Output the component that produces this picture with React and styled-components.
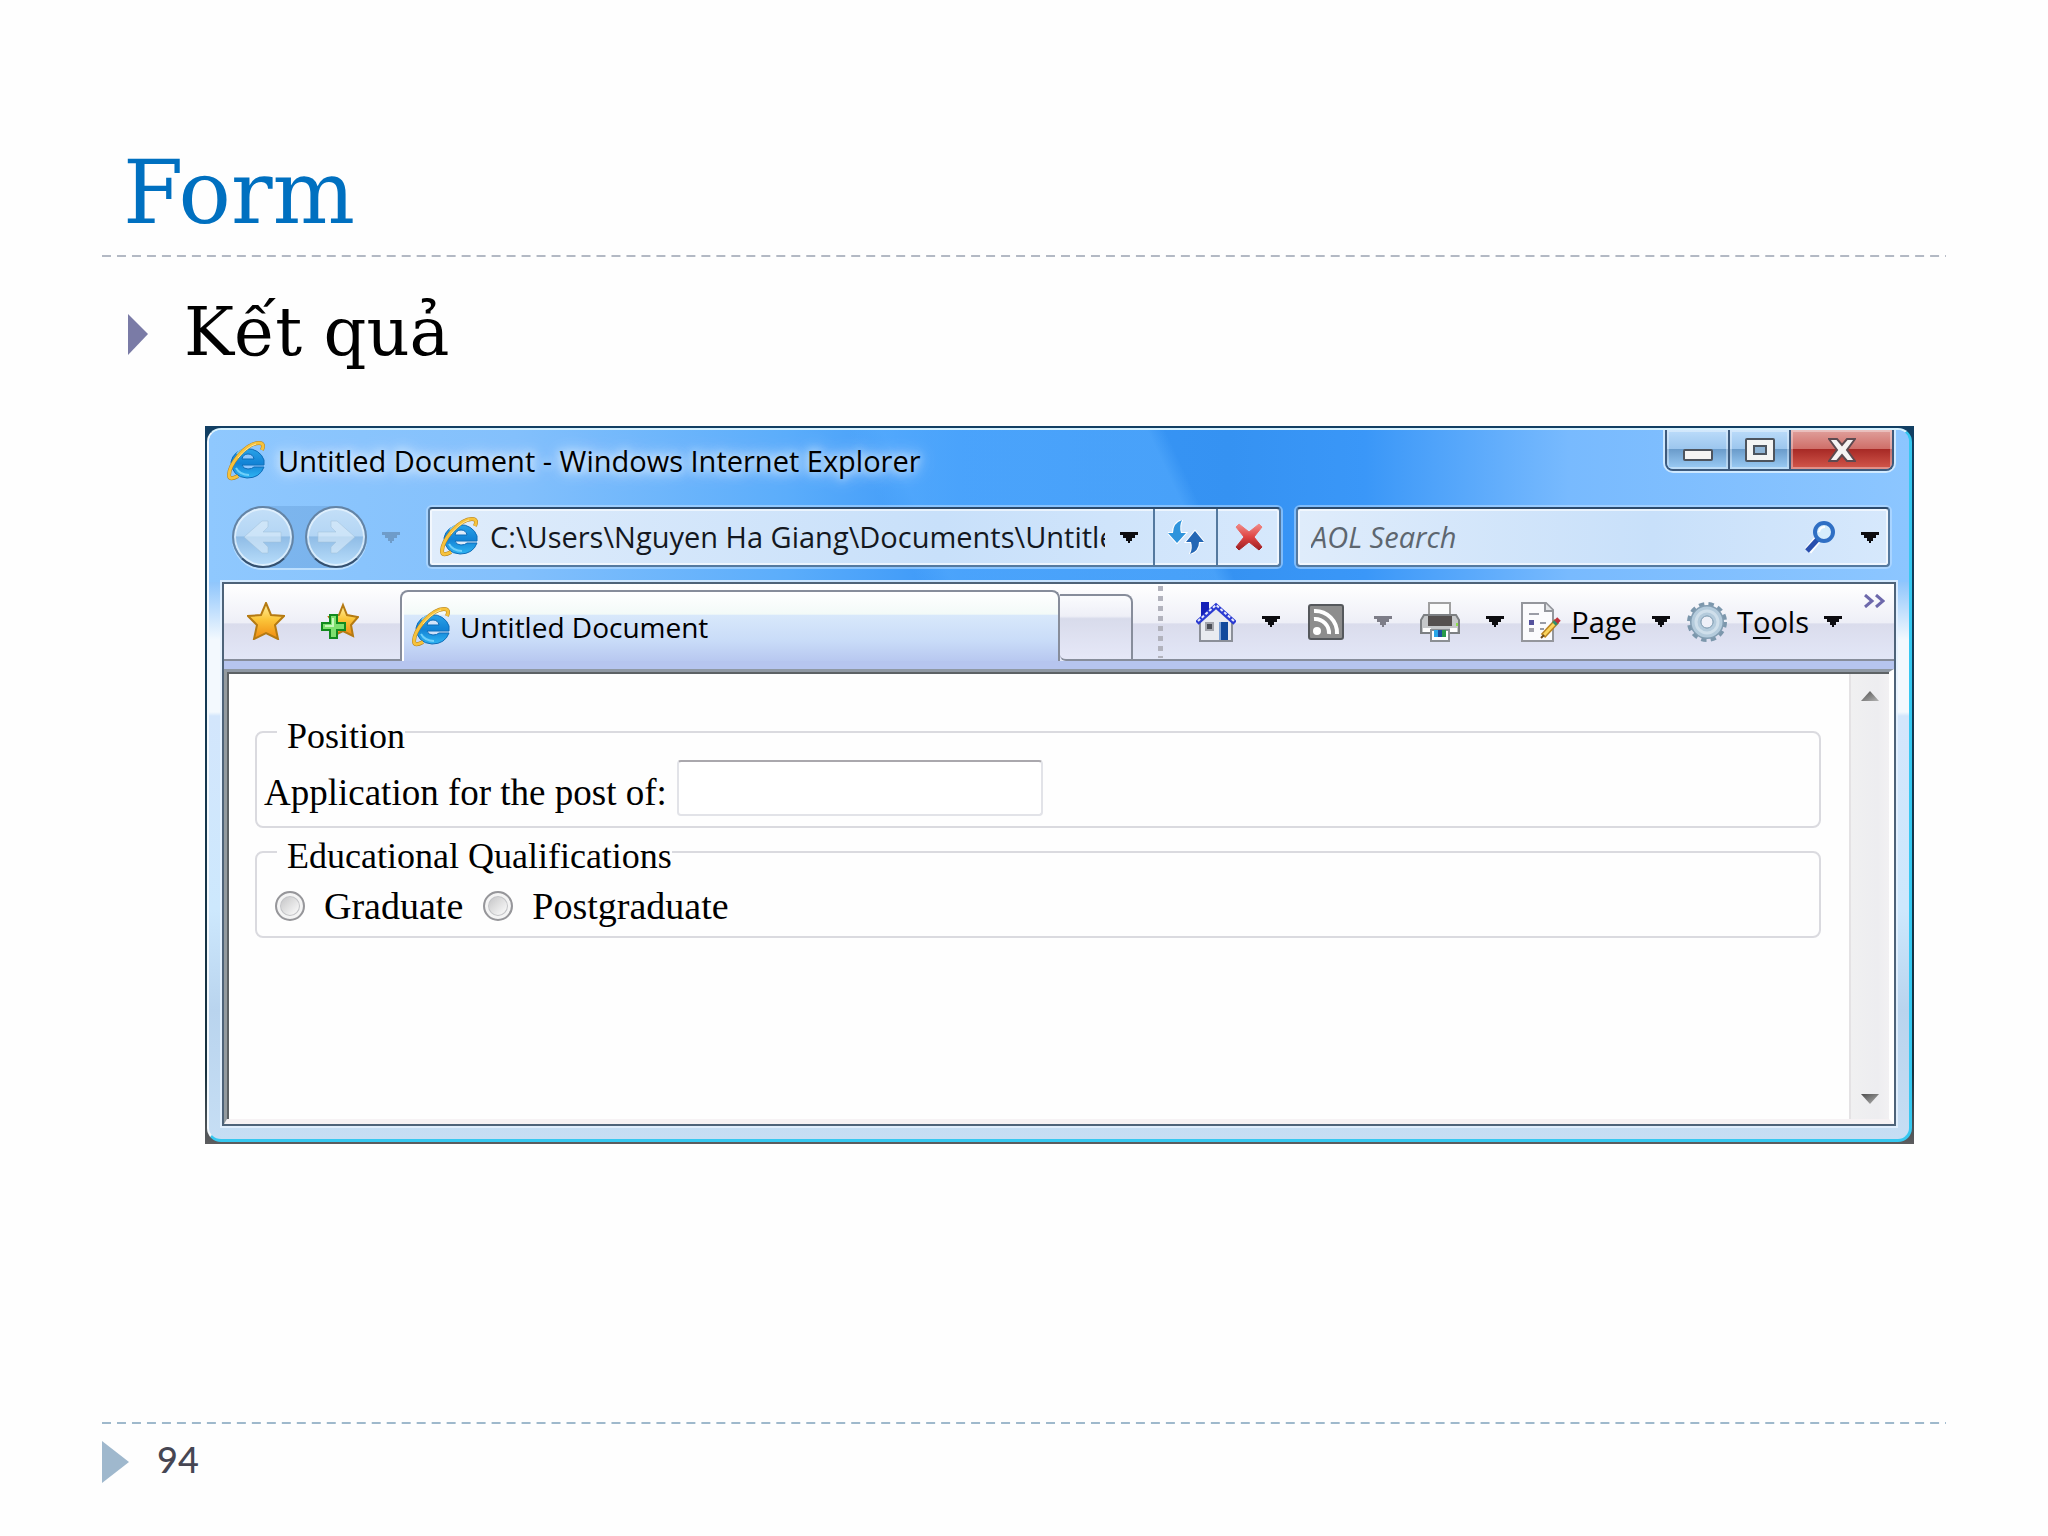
import React, { useState } from 'react';
import styled, { createGlobalStyle, css } from 'styled-components';

const GlobalStyle = createGlobalStyle`
  * {
    box-sizing: border-box;
  }

  body {
    margin: 0;
    background: #fefefe;
    color: #000;
    font-family: "Open Sans", "Noto Sans", sans-serif;
  }

  button, input {
    font: inherit;
    color: inherit;
    border: 0;
    padding: 0;
    margin: 0;
    background: none;
  }
`;

/* ---------- icons ---------- */

const IeIcon = () => (
  <svg width="38" height="40" viewBox="0 0 38 40" aria-hidden="true">
    <defs>
      <linearGradient id="ieBlue" x1="0" y1="0" x2="0" y2="1">
        <stop offset="0" stopColor="#2aa3e8" />
        <stop offset="0.5" stopColor="#1283d6" />
        <stop offset="1" stopColor="#2fb4f2" />
      </linearGradient>
    </defs>
    <path
      d="M4 21A17 16 0 0 1 37 19V24H15Q16 28 21 28Q25 28 27 26H37Q33 37 20 37Q5 36 4 21ZM15 18H27Q26 13 21 13Q16 13 15 18Z"
      fill="url(#ieBlue)"
      stroke="#0d6cb8"
      strokeWidth="1"
      fillRule="evenodd"
    />
    <path d="M10 13Q14 8 21 8" fill="none" stroke="#8bd6fa" strokeWidth="2" />
    <path d="M9 27Q13 34 22 34" fill="none" stroke="#6fd0fa" strokeWidth="2" />
    <path
      d="M35 9Q38 2 32 2Q23 2 12 14Q2 26 2 34Q2 40 11 35"
      fill="none"
      stroke="#b07f20"
      strokeWidth="4"
    />
    <path
      d="M35 9Q38 2 32 2Q23 2 12 14Q2 26 2 34Q2 40 11 35"
      fill="none"
      stroke="#f6c23c"
      strokeWidth="3"
    />
    <path d="M29 3Q20 6 11 17" fill="none" stroke="#fde695" strokeWidth="1" />
  </svg>
);

const ArrowIcon = ({ flip }) => (
  <svg width="40" height="36" viewBox="0 0 40 36" aria-hidden="true">
    <path
      d="M1 18L19 2L25 2L25 8L20 13H38V23H20L25 28V34H19Z"
      fill="#dcecfa"
      fillOpacity="0.6"
      stroke="#9fbfd9"
      strokeOpacity="0.5"
      transform={flip ? 'translate(40 0) scale(-1 1)' : undefined}
    />
  </svg>
);

const Caret = ({ color = '#0c0c10' }) => (
  <svg width="18" height="11" viewBox="0 0 18 11" aria-hidden="true">
    <path d="M0 0H18V3H15V6H12V9H10V11H8V9H6V6H3V3H0Z" fill={color} />
  </svg>
);

const ScrollArrow = ({ down }) => (
  <svg width="18" height="10" viewBox="0 0 18 10" aria-hidden="true">
    <defs>
      <linearGradient id="scrollFill" x1="0" y1="0" x2="1" y2="1">
        <stop offset="0" stopColor="#4c4c4c" />
        <stop offset="1" stopColor="#b4b4b4" />
      </linearGradient>
    </defs>
    <path d={down ? 'M0 0H18L9 10Z' : 'M0 10H18L9 0Z'} fill="url(#scrollFill)" />
  </svg>
);

const RefreshIcon = () => (
  <svg width="36" height="34" viewBox="0 0 36 34" aria-hidden="true">
    <g stroke="#fff" strokeWidth="2" paintOrder="stroke">
      <path d="M14 0Q5 3 5 13H0L9 23L18 13H13Q11 6 14 0Z" fill="#2f94dc" />
      <path d="M22 34Q31 31 31 22H36L27 11L18 22H23Q25 28 22 34Z" fill="#2467b5" />
    </g>
  </svg>
);

const StopIcon = () => (
  <svg width="28" height="28" viewBox="0 0 28 28" aria-hidden="true">
    <defs>
      <linearGradient id="stopRed" x1="0" y1="0" x2="0" y2="1">
        <stop offset="0" stopColor="#f08b88" />
        <stop offset="0.5" stopColor="#df4442" />
        <stop offset="1" stopColor="#9c1f24" />
      </linearGradient>
    </defs>
    <path
      d="M1 4L4 1L14 9L24 1L27 4L19 14L27 24L24 27L14 19L4 27L1 24L9 14Z"
      fill="url(#stopRed)"
      stroke="url(#stopRed)"
    />
  </svg>
);

const SearchIcon = () => (
  <svg width="32" height="34" viewBox="0 0 32 34" aria-hidden="true">
    <path d="M3 31L12 20" stroke="#fff" strokeWidth="8" />
    <path d="M2 31L13 19" stroke="#2a4fae" strokeWidth="5" />
    <circle cx="19" cy="12" r="9" fill="#d5edfc" stroke="#2f6fc4" strokeWidth="4" />
    <path d="M14 12Q15 7 20 7" fill="none" stroke="#fff" strokeWidth="2" />
  </svg>
);

const StarIcon = () => (
  <svg width="38" height="38" viewBox="0 0 38 38" aria-hidden="true">
    <defs>
      <linearGradient id="starGold" x1="0" y1="0" x2="0" y2="1">
        <stop offset="0" stopColor="#fff2a8" />
        <stop offset="0.45" stopColor="#fbc63a" />
        <stop offset="1" stopColor="#f08a10" />
      </linearGradient>
    </defs>
    <path
      d="M19 1L24 13L37 14L28 23L31 37L19 31L7 37L10 23L1 14L14 13Z"
      fill="url(#starGold)"
      stroke="#b57a12"
      strokeWidth="2"
    />
  </svg>
);

const AddStarIcon = () => (
  <svg width="38" height="38" viewBox="0 0 38 38" aria-hidden="true">
    <path
      d="M22 3L26 13L37 15L30 23L32 34L22 29L12 34L14 23L8 15L18 13Z"
      fill="url(#starGold)"
      stroke="#b57a12"
      strokeWidth="2"
    />
    <path
      d="M9 13H16V21H24V28H16V36H9V28H1V21H9Z"
      fill="#7ee06e"
      stroke="#128a1e"
      strokeWidth="2"
    />
    <path d="M12 16V24H4" fill="none" stroke="#c9f8bd" strokeWidth="2" />
  </svg>
);

const HomeIcon = () => (
  <svg width="40" height="40" viewBox="0 0 40 40" aria-hidden="true">
    <path d="M5 0H13V14H5Z" fill="#1420b8" />
    <path d="M4 19L20 4L36 19V39H4Z" fill="#e9ebf0" stroke="#8b8f98" strokeWidth="2" />
    <path d="M1 21L20 4L39 21" fill="none" stroke="#2b3bd2" strokeWidth="5" />
    <path
      d="M2 19L20 3L38 19"
      fill="none"
      stroke="#e6e9fb"
      strokeWidth="2"
      strokeDasharray="3 2"
    />
    <path d="M10 21H17V28H10Z" fill="#4a4d55" stroke="#a4a6ad" strokeWidth="2" />
    <path d="M23 20H32V38H23Z" fill="#124a9c" />
    <path d="M23 20H25V38H23Z" fill="#7ea3d6" />
  </svg>
);

const FeedIcon = () => (
  <svg width="36" height="36" viewBox="0 0 36 36" aria-hidden="true">
    <rect x="1" y="1" width="34" height="34" rx="2" fill="#8d8d8d" stroke="#55585c" strokeWidth="2" />
    <circle cx="9" cy="27" r="4" fill="#fff" />
    <path d="M6 15A14 14 0 0 1 21 30" fill="none" stroke="#fff" strokeWidth="4" />
    <path d="M6 7A22 22 0 0 1 29 30" fill="none" stroke="#fff" strokeWidth="4" />
  </svg>
);

const PrinterIcon = () => (
  <svg width="40" height="40" viewBox="0 0 40 40" aria-hidden="true">
    <path d="M9 1H30V15H9Z" fill="#fbfbfb" stroke="#a0a0a0" strokeWidth="2" />
    <path d="M4 13H36L39 18V31H1V18Z" fill="#c6c8ca" stroke="#7d8083" strokeWidth="2" />
    <path d="M8 14H32V24H8Z" fill="#55504f" />
    <path d="M3 26H11V30H3ZM30 26H37V30H30Z" fill="#fff" />
    <path d="M36 21H38V24H36Z" fill="#8fe04e" />
    <path d="M11 28H29V39H11Z" fill="#fff" stroke="#8b8f93" strokeWidth="2" />
    <path d="M14 28H18V35H14Z" fill="#2aa7e8" />
    <path d="M18 28H22V35H18Z" fill="#1d4fa0" />
    <path d="M22 28H26V35H22Z" fill="#2a9a4c" />
  </svg>
);

const PageIcon = () => (
  <svg width="40" height="40" viewBox="0 0 40 40" aria-hidden="true">
    <path d="M1 1H25L32 8V39H1Z" fill="#fbfbfd" stroke="#94969c" strokeWidth="2" />
    <path d="M24 1V9H32" fill="#e4e6ea" stroke="#94969c" strokeWidth="2" />
    <path d="M8 12H18M19 21H25M19 27H23" stroke="#9a9ca6" strokeWidth="2" />
    <path d="M8 18H13V23H8Z" fill="#54519c" />
    <path d="M8 26H13V30H8Z" fill="#a2a2aa" />
    <path d="M22 34L36 19" stroke="#b98221" strokeWidth="6" />
    <path d="M23 33L35 20" stroke="#fbd45c" strokeWidth="3" />
    <path d="M34 21L38 17" stroke="#c0313c" strokeWidth="5" />
    <path d="M33 22L35 20" stroke="#2f8f6b" strokeWidth="5" />
    <path d="M20 36L23 33" stroke="#6b4a1a" strokeWidth="2" />
  </svg>
);

const GearIcon = () => (
  <svg width="40" height="40" viewBox="0 0 40 40" aria-hidden="true">
    <circle cx="20" cy="20" r="17" fill="none" stroke="#7c97ac" strokeWidth="6" strokeDasharray="5 4" />
    <circle cx="20" cy="20" r="11" fill="none" stroke="#829db2" strokeWidth="12" />
    <circle cx="20" cy="20" r="11" fill="none" stroke="#b4cbdc" strokeWidth="9" />
    <circle cx="20" cy="20" r="11" fill="none" stroke="#cfdfeb" strokeWidth="3" />
    <circle cx="20" cy="20" r="6" fill="#eef0f8" stroke="#8ba6ba" strokeWidth="1" />
  </svg>
);

const MoreIcon = () => (
  <svg width="21" height="14" viewBox="0 0 21 14" aria-hidden="true">
    <path d="M1 1L8 7L1 13M12 1L19 7L12 13" fill="none" stroke="#6d68ab" strokeWidth="3" />
  </svg>
);

const MinimizeIcon = () => (
  <svg width="30" height="12" viewBox="0 0 30 12" aria-hidden="true">
    <rect x="1" y="1" width="28" height="10" rx="1" fill="#f4f4f4" stroke="#4d545e" strokeWidth="2" />
  </svg>
);

const MaximizeIcon = () => (
  <svg width="30" height="24" viewBox="0 0 30 24" aria-hidden="true">
    <rect x="1" y="1" width="28" height="22" rx="1" fill="#f4f4f4" stroke="#4d545e" strokeWidth="2" />
    <rect x="9" y="8" width="12" height="8" fill="#8fb4d6" stroke="#4d545e" strokeWidth="2" />
  </svg>
);

const CloseIcon = () => (
  <svg width="28" height="24" viewBox="0 0 28 24" aria-hidden="true">
    <path
      d="M1 1H9L14 7L19 1H27L19 12L27 23H19L14 17L9 23H1L9 12Z"
      fill="#f6f3f3"
      stroke="#5d4a50"
      strokeWidth="2"
    />
  </svg>
);

/* ---------- page ---------- */

const commands = [
  { name: 'Home', icon: <HomeIcon /> },
  { name: 'Feeds', icon: <FeedIcon />, disabled: true },
  { name: 'Print', icon: <PrinterIcon /> },
];

const App = () => {
  const [post, setPost] = useState('');
  const [address, setAddress] = useState('C:\\Users\\Nguyen Ha Giang\\Documents\\Untitled');

  return (
    <>
      <GlobalStyle />
      <Slide>
        <Title>Form</Title>
        <DashedLine color="#b3b9c4" />
        <Bullet>
          <BulletMark width="20" height="41" viewBox="0 0 20 41" aria-hidden="true">
            <path d="M0 0L20 20L0 41Z" fill="#7a7ba6" />
          </BulletMark>
          Kết quả
        </Bullet>

        <Window>
          <Frame>
            <Header>
              <TitleBar>
                <WindowTitle>
                  <IeIcon />
                  <span>Untitled Document - Windows Internet Explorer</span>
                </WindowTitle>
                <WindowButtons>
                  <WindowButton aria-label="Minimize" low><MinimizeIcon /></WindowButton>
                  <WindowButton aria-label="Maximize"><MaximizeIcon /></WindowButton>
                  <WindowButton aria-label="Close" danger><CloseIcon /></WindowButton>
                </WindowButtons>
              </TitleBar>

              <NavBar>
                <History>
                  <RoundButton aria-label="Back"><ArrowIcon /></RoundButton>
                  <RoundButton aria-label="Forward"><ArrowIcon flip /></RoundButton>
                </History>
                <HistoryMenu aria-label="Recent pages"><Caret color="#6f9cc9" /></HistoryMenu>
                <AddressBar>
                  <IeIcon />
                  <AddressInput
                    aria-label="Address"
                    value={address}
                    onChange={(e) => setAddress(e.target.value)}
                  />
                  <FieldButton aria-label="Show addresses" width={48}><Caret /></FieldButton>
                  <FieldButton aria-label="Refresh" width={63} divided><RefreshIcon /></FieldButton>
                  <FieldButton aria-label="Stop" width={63} divided><StopIcon /></FieldButton>
                </AddressBar>
                <SearchBar>
                  <SearchInput aria-label="Search" placeholder="AOL Search" />
                  <FieldButton aria-label="Search" width={63}><SearchIcon /></FieldButton>
                  <FieldButton aria-label="Search options" width={36}><Caret /></FieldButton>
                </SearchBar>
              </NavBar>
            </Header>

            <Client>
              <TabRow>
                <Favorites>
                  <button aria-label="Favorites"><StarIcon /></button>
                  <button aria-label="Add to favorites"><AddStarIcon /></button>
                </Favorites>
                <Tab><IeIcon />Untitled Document</Tab>
                <NewTab aria-label="New tab" />
                <Commands>
                  <Grip />
                  <CommandGroup>
                    {commands.map((item) => (
                      <Command key={item.name} aria-label={item.name}>
                        <CommandIcon>{item.icon}</CommandIcon>
                        <Caret color={item.disabled ? '#7d7d88' : undefined} />
                      </Command>
                    ))}
                  </CommandGroup>
                  <MenuCommand>
                    <PageIcon /><span><u>P</u>age</span><Caret />
                  </MenuCommand>
                  <MenuCommand>
                    <GearIcon /><span>T<u>o</u>ols</span><Caret />
                  </MenuCommand>
                  <More aria-label="More commands"><MoreIcon /></More>
                </Commands>
              </TabRow>
              <Strip />

              <View>
                <Document>
                  <Fieldset>
                    <legend>Position</legend>
                    <FieldRow>
                      <label htmlFor="post">Application for the post of:</label>
                      <TextBox id="post" value={post} onChange={(e) => setPost(e.target.value)} />
                    </FieldRow>
                  </Fieldset>
                  <Fieldset>
                    <legend>Educational Qualifications</legend>
                    <RadioRow>
                      <RadioLabel><Radio name="level" value="graduate" />Graduate</RadioLabel>
                      <RadioLabel><Radio name="level" value="postgraduate" />Postgraduate</RadioLabel>
                    </RadioRow>
                  </Fieldset>
                </Document>
                <ScrollBar>
                  <button aria-label="Scroll up"><ScrollArrow /></button>
                  <button aria-label="Scroll down"><ScrollArrow down /></button>
                </ScrollBar>
              </View>
            </Client>
          </Frame>
        </Window>

        <Footer>
          <DashedLine color="#9fb9cc" />
          <PageNumber>
            <svg width="27" height="42" viewBox="0 0 27 42" aria-hidden="true">
              <path d="M0 0L27 21L0 42Z" fill="#9fb8cd" />
            </svg>
            <span>94</span>
          </PageNumber>
        </Footer>
      </Slide>
    </>
  );
};

export default App;

/* ---------- slide ---------- */

const Slide = styled.main`
  min-height: 100vh;
  display: flex;
  flex-direction: column;
  padding: 143px 102px 48px;
`;

const Title = styled.h1`
  margin: 0;
  padding: 0 21px 12px;
  font-family: "DejaVu Serif", serif;
  font-weight: 400;
  font-size: 87px;
  line-height: 100px;
  color: #0070c0;
`;

const DashedLine = styled.div`
  height: 2px;
  background: linear-gradient(90deg, ${props => props.color} 60%, transparent 60%) 0 0 / 15px 2px round;
`;

const Bullet = styled.div`
  display: flex;
  align-items: center;
  gap: 36px;
  margin-top: 35px;
  padding-left: 26px;
  font-family: "DejaVu Serif", serif;
  font-size: 67px;
  line-height: 80px;
`;

const BulletMark = styled.svg`
  flex: none;
  margin-top: 4px;
`;

const Footer = styled.footer`
  margin-top: auto;
`;

const PageNumber = styled.div`
  display: flex;
  align-items: center;
  gap: 28px;
  margin-top: 12px;
  font-family: Lato, sans-serif;
  font-size: 36px;
  line-height: 46px;
  color: #464653;

  span {
    padding-bottom: 6px;
    font-weight: 500;
  }
`;

/* ---------- browser window ---------- */

const Window = styled.section`
  margin: 54px 32px 32px 103px;
  padding: 2px;
  background: linear-gradient(#123f63, #16313f 90%, #5c5c5e);
`;

const Frame = styled.div`
  border: solid;
  border-width: 2px 3px 3px 2px;
  border-color: #d6f2ff #35c8f0 #35c8f0 #f2f8fd;
  border-radius: 14px;
  overflow: hidden;
  padding-bottom: 13px;
  background: linear-gradient(
    #7fbdfb 0, #8cc4fc 150px, #f3f9fe 210px, #f3f9fe 282px,
    #d3e6fc 286px, #cde8fd 480px, #b9d4ee 580px, #c6def4
  );
`;

const Header = styled.header`
  padding-bottom: 14px;
  background:
    linear-gradient(65deg, transparent 40%, rgba(90, 175, 255, 0.5) 42% 57%, transparent 58%),
    linear-gradient(90deg, #8fc8fe 0, #83c0fc 18%, #5badfb 34%, #3a97f8 44%, #3592f2 60%, #3a97f8 68%, #78bafe 80%, #8cc6ff 100%);
`;

const TitleBar = styled.div`
  display: flex;
  justify-content: space-between;
  align-items: flex-start;
  padding: 0 15px 0 18px;
`;

const WindowTitle = styled.div`
  display: flex;
  align-items: center;
  gap: 13px;
  padding: 11px 0 14px;
  font-size: 29px;
  line-height: 40px;

  span {
    text-shadow:
      0 0 8px rgba(255, 255, 255, 0.7),
      0 0 14px rgba(255, 255, 255, 0.8),
      0 0 20px rgba(255, 255, 255, 0.8);
  }
`;

const WindowButtons = styled.div`
  display: flex;
  height: 41px;
  border: 2px solid #3d5a7c;
  border-top: 0;
  border-radius: 0 0 8px 8px;
  box-shadow: 0 0 0 2px rgba(225, 242, 255, 0.8);
  overflow: hidden;
`;

const WindowButton = styled.button`
  width: ${props => props.danger ? '103px' : '61px'};
  display: flex;
  justify-content: center;
  align-items: ${props => props.low ? 'flex-end' : 'center'};
  padding-bottom: ${props => props.low ? '8px' : '0'};
  background: linear-gradient(#bcdcfa, #9cc6ee 48%, #6b9ccb 50%, #9ccdf6);
  box-shadow: inset 0 0 0 2px rgba(255, 255, 255, 0.35);

  & + & {
    border-left: 2px solid #3d5a7c;
  }

  ${props => props.danger && css`
    background: linear-gradient(#e0a09c, #cf6f69 48%, #a82a26 50%, #d3584c);
  `}
`;

const NavBar = styled.div`
  display: flex;
  align-items: center;
  padding: 11px 19px 0 23px;
`;

const History = styled.div`
  display: flex;
  gap: 11px;
  border-radius: 32px;
  background: rgba(74, 132, 190, 0.25);
  box-shadow: 0 2px 0 rgba(220, 240, 255, 0.6);
`;

const RoundButton = styled.button`
  width: 62px;
  height: 62px;
  display: flex;
  align-items: center;
  justify-content: center;
  border: 2px solid #6484a5;
  border-bottom-color: #35506e;
  border-radius: 50%;
  background: linear-gradient(#c3dff8, #b3d5f4 48%, #8fbce6 50%, #b9defb);
  box-shadow: inset 0 0 0 2px rgba(235, 246, 255, 0.7);
`;

const HistoryMenu = styled.button`
  display: flex;
  padding: 8px 28px 8px 15px;
`;

const field = css`
  display: flex;
  align-items: center;
  height: 60px;
  border: 2px solid #54799f;
  border-top-color: #2c4a6b;
  border-radius: 4px;
  box-shadow: 0 0 0 2px rgba(200, 228, 255, 0.5), inset 0 0 0 2px rgba(255, 255, 255, 0.6);
  background: linear-gradient(90deg, #dfecfb, #c8e0fa 60%, #d6e8fc);
`;

const AddressBar = styled.div`
  ${field}
  flex: 855 1 0;
  min-width: 0;
  margin-right: 15px;
  padding-left: 10px;
`;

const SearchBar = styled.div`
  ${field}
  flex: 588 1 0;
  min-width: 0;
  padding-left: 13px;
`;

const AddressInput = styled.input`
  flex: 1;
  min-width: 0;
  margin-left: 12px;
  font-size: 29px;
  line-height: 36px;
  color: #14181f;
  outline: none;
`;

const SearchInput = styled(AddressInput)`
  margin-left: 0;
  font-style: italic;

  &::placeholder {
    color: #5d666f;
    opacity: 1;
  }
`;

const FieldButton = styled.button`
  align-self: stretch;
  display: flex;
  align-items: center;
  justify-content: center;
  width: ${props => props.width}px;
  border-left: ${props => props.divided ? '2px solid #54799f' : '0'};
`;

/* ---------- tabs and commands ---------- */

const Client = styled.div`
  margin: 0 13px;
  border: 2px solid #4e6379;
  background: #fff;
  box-shadow: 0 0 0 2px rgba(230, 243, 255, 0.8);
`;

const barFill = 'linear-gradient(#fff, #eeeff7 50%, #dadcec 52%, #e3e7f8)';

const TabRow = styled.div`
  display: flex;
  align-items: stretch;
  height: 77px;
  background: ${barFill};
`;

const Favorites = styled.div`
  display: flex;
  align-items: center;
  gap: 36px;
  padding: 0 41px 2px 23px;
  border-bottom: 2px solid #878d9b;

  button {
    display: flex;
  }
`;

const Tab = styled.div`
  flex: 1;
  min-width: 0;
  display: flex;
  align-items: center;
  gap: 10px;
  margin-top: 6px;
  padding-left: 10px;
  border: 2px solid #878d9b;
  border-bottom: 0;
  border-radius: 8px 8px 0 0;
  box-shadow: inset 2px 2px 0 #fff;
  background: linear-gradient(#fff, #f3faf8 32%, #d8e8fb 34%, #c9dcf8 70%, #b8c8f0);
  font-size: 28px;
  line-height: 36px;
  white-space: nowrap;
`;

const NewTab = styled.button`
  width: 73px;
  margin-top: 10px;
  border: 2px solid #878d9b;
  border-left: 0;
  border-radius: 0 8px 0 6px;
  background: linear-gradient(#fbfcfe, #eeeff7 32%, #d8dbeb 36%, #e6e8f8);
`;

const Commands = styled.div`
  display: flex;
  align-items: center;
  padding: 0 9px 0 25px;
  border-bottom: 2px solid #878d9b;
  font-size: 29px;
  line-height: 36px;
`;

const Grip = styled.div`
  width: 5px;
  height: 72px;
  margin-right: 33px;
  background: repeating-linear-gradient(#b2b3bd 0 5px, transparent 5px 10px);
`;

const CommandGroup = styled.div`
  display: flex;
  gap: 28px;
`;

const Command = styled.button`
  display: flex;
  align-items: center;
  gap: 26px;
`;

const CommandIcon = styled.span`
  width: 40px;
  display: flex;
`;

const MenuCommand = styled.button`
  display: flex;
  align-items: center;
  gap: 10px;
  margin-left: 17px;

  span {
    padding-right: 5px;
  }

  u {
    text-underline-offset: 4px;
    text-decoration-thickness: 2px;
  }
`;

const More = styled.button`
  align-self: flex-start;
  display: flex;
  margin: 10px 0 0 22px;
`;

const Strip = styled.div`
  height: 8px;
  background: #b6c5ef;
`;

/* ---------- document ---------- */

const View = styled.div`
  display: flex;
  min-height: 455px;
  border: solid;
  border-width: 3px 5px 5px 3px;
  border-color: #8f98a3 #fff #f6f2f4 #949b9f;
  background: #fefefe;
  box-shadow: inset 2px 2px 0 #5d6265;
`;

const Document = styled.form`
  flex: 1;
  padding: 36px 28px 0 28px;
  font-family: "Liberation Serif", serif;
  font-size: 36px;
  line-height: 40px;
`;

const Fieldset = styled.fieldset`
  margin: 0;
  padding: 4px 7px 10px;
  border: 2px solid #dadadf;
  border-radius: 8px;

  legend {
    margin-left: 13px;
    padding: 8px 0 0 10px;
  }
`;

const FieldRow = styled.div`
  display: flex;
  align-items: center;
  gap: 10px;
  font-size: 37px;

  label {
    padding-top: 10px;
  }
`;

const TextBox = styled.input`
  width: 366px;
  height: 56px;
  padding: 0 8px;
  border: 2px solid #e2e3e8;
  border-top-color: #aaa8ad;
  border-radius: 4px;
  background: #fff;
`;

const RadioRow = styled.div`
  display: flex;
  gap: 20px;
  padding: 6px 11px 0;
  font-size: 38px;
`;

const RadioLabel = styled.label`
  display: flex;
  align-items: center;
  gap: 19px;
`;

const Radio = styled.input.attrs({ type: 'radio' })`
  appearance: none;
  width: 30px;
  height: 30px;
  border: 2px solid #96969a;
  border-radius: 50%;
  box-shadow: inset 0 0 0 3px #f4f4f4, inset 0 0 0 4px #c4c5c8;
  background: linear-gradient(135deg, #b9b9bb, #f2f2f2 70%);

  &:checked {
    background: #2f6fa8;
  }
`;

const ScrollBar = styled.div`
  width: 40px;
  display: flex;
  flex-direction: column;
  justify-content: space-between;
  margin-top: 2px;
  padding: 17px 0 15px;
  border-left: 2px solid #e4e2e4;
  background: linear-gradient(90deg, #f0f0f1, #ededf0 70%, #f2f1f3);

  button {
    display: flex;
    justify-content: center;
  }
`;
